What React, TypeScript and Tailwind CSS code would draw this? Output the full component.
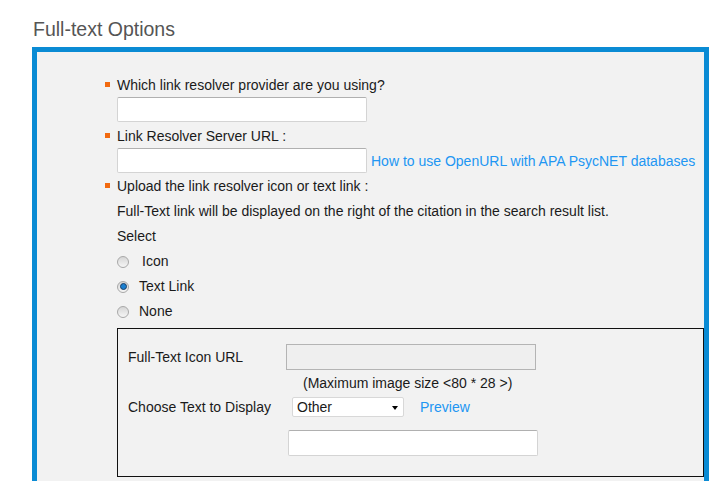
import React from "react";

function Bullet({ children }: { children: React.ReactNode }) {
  return (
    <div className="relative h-[25px] pt-[2px] flex items-center">
      <span className="absolute left-[-12px] top-[10px] w-[5px] h-[5px] bg-[#f26a10]" />
      <span>{children}</span>
    </div>
  );
}

function Radio({ checked, label, gap }: { checked?: boolean; label: string; gap: string }) {
  return (
    <div className="h-[25px] pt-[2px] flex items-center">
      <span className="relative w-[12px] h-[12px] rounded-full border border-[#a8a8a8] bg-gradient-to-b from-[#d6d6d6] to-[#f6f6f6] flex items-center justify-center">
        {checked && (
          <span className="w-[7px] h-[7px] rounded-full bg-[#1a7fd0] border border-[#1d3f66]" />
        )}
      </span>
      <span className={gap}>{label}</span>
    </div>
  );
}

export default function App() {
  return (
    <div
      className="w-[712px] h-[481px] bg-white overflow-hidden text-[14px] text-[#1a1a1a]"
      style={{ fontFamily: '"Liberation Sans", Arial, sans-serif' }}
    >
      <div className="pl-[33px] pt-[17px] h-[47px] text-[19.5px] leading-[24px] text-[#555555]">
        Full-text Options
      </div>
      <div className="ml-[32px] w-[677px] h-[440px] border-[5px] border-b-0 border-[#0a8bd4] bg-[#f2f2f2] pt-[20px] pl-[80px]">
        <Bullet>Which link resolver provider are you using?</Bullet>
        <div className="w-[250px] h-[25px] bg-white border border-[#d4d4d4] border-t-[#b0b0b0] rounded-[2px]" />
        <div className="mt-[1px]">
          <Bullet>Link Resolver Server URL :</Bullet>
        </div>
        <div className="flex items-center">
          <div className="w-[250px] h-[25px] bg-white border border-[#d4d4d4] border-t-[#b0b0b0] rounded-[2px]" />
          <span className="ml-[4px] pt-[2px] text-[#2196f3]">How to use OpenURL with APA PsycNET databases</span>
        </div>
        <Bullet>Upload the link resolver icon or text link :</Bullet>
        <div className="h-[25px] pt-[2px] flex items-center">
          Full-Text link will be displayed on the right of the citation in the search result list.
        </div>
        <div className="h-[25px] pt-[2px] flex items-center">Select</div>
        <Radio label="Icon" gap="ml-[13px]" />
        <Radio checked label="Text Link" gap="ml-[10px]" />
        <Radio label="None" gap="ml-[10px]" />
        <div className="mt-[5px] w-[587px] h-[149px] border border-[#111111] pt-[15px] pl-[10px]">
          <div className="flex items-center h-[26px]">
            <span className="w-[158px] pt-[1px]">Full-Text Icon URL</span>
            <div className="w-[250px] h-[26px] bg-[#efefef] border border-[#b4b4b4]" />
          </div>
          <div className="h-[25px] pt-[2px] flex items-center pl-[175px]">(Maximum image size &lt;80 * 28 &gt;)</div>
          <div className="mt-[2px] flex items-center h-[20px]">
            <span className="w-[164px] pt-[1px]">Choose Text to Display</span>
            <div className="relative w-[112px] h-[20px] bg-white border border-[#d8d8d8] rounded-[2px] flex items-center pl-[4px]">
              Other
              <span className="absolute right-[5px] top-[8px] w-0 h-0 border-l-[3.5px] border-r-[3.5px] border-t-[4px] border-l-transparent border-r-transparent border-t-black" />
            </div>
            <span className="ml-[16px] pt-[1px] text-[#2196f3]">Preview</span>
          </div>
          <div className="mt-[13px] ml-[160px] w-[250px] h-[26px] bg-white border border-[#d4d4d4] border-t-[#b0b0b0] rounded-[2px]" />
        </div>
      </div>
    </div>
  );
}
